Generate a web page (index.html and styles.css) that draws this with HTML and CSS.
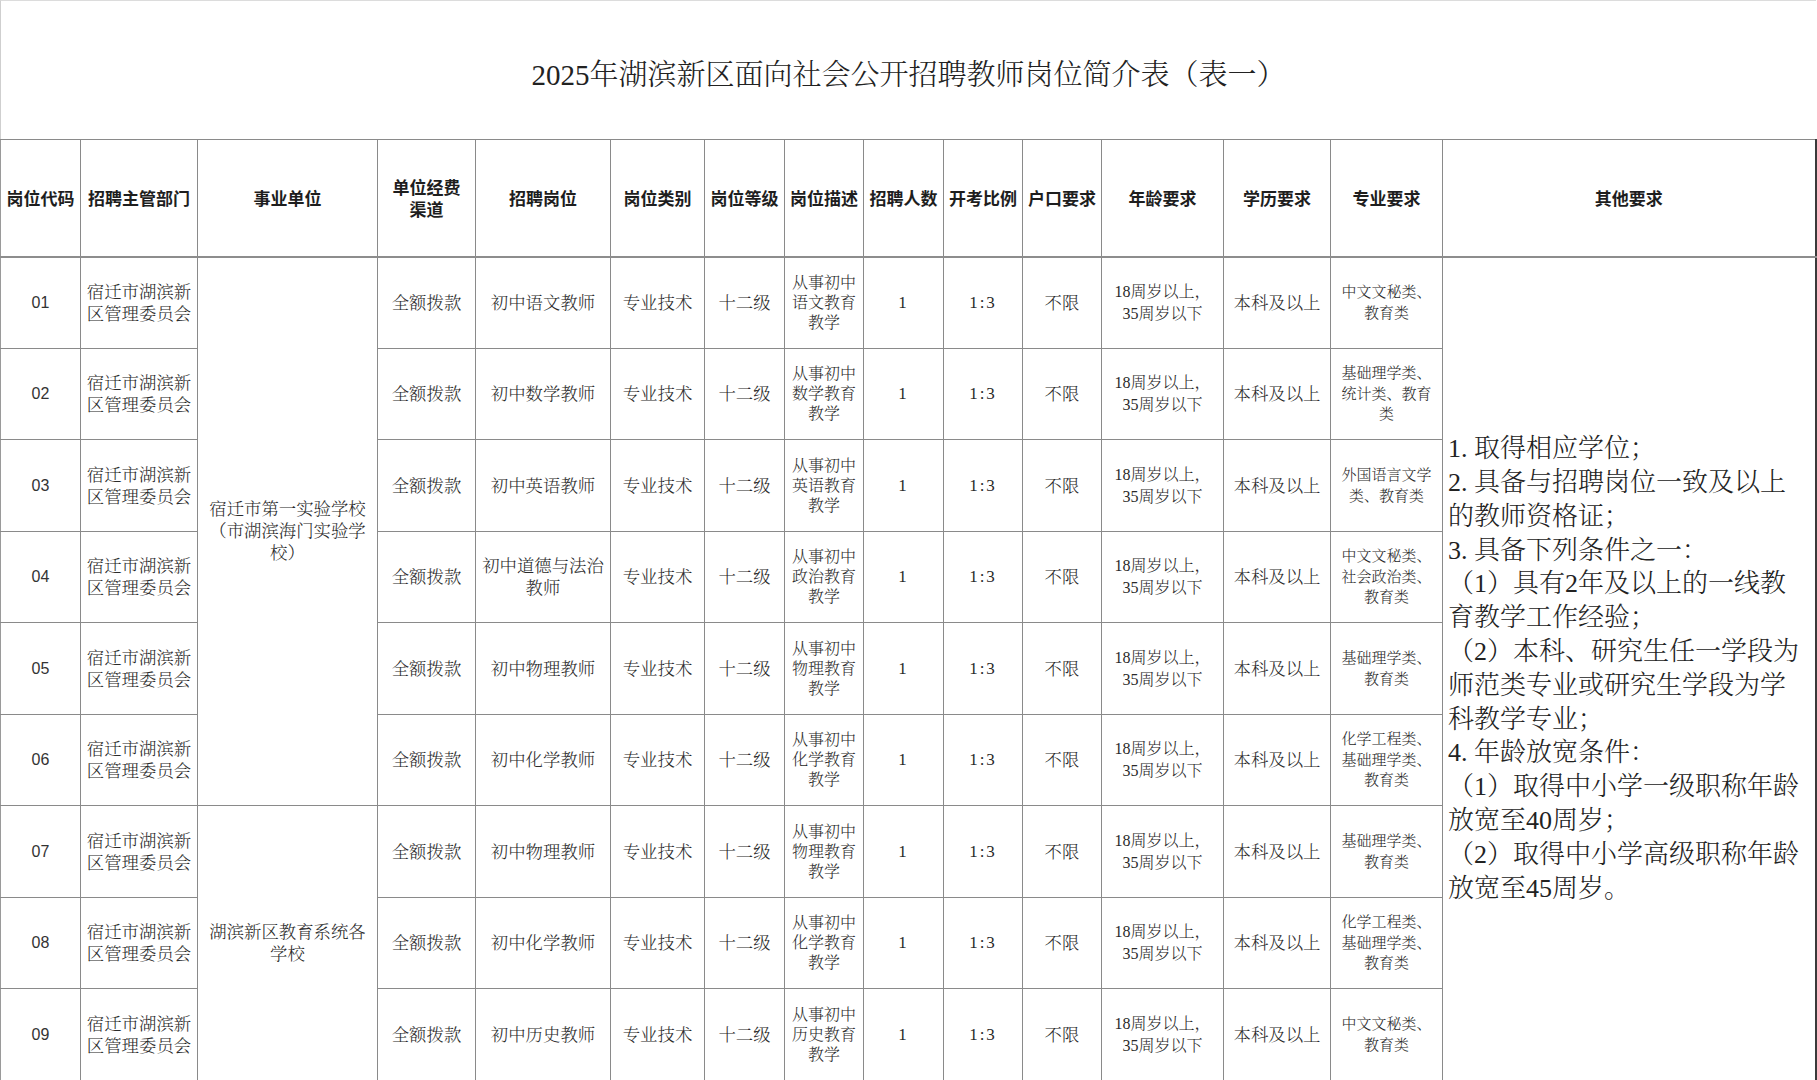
FILE: index.html
```html
<!DOCTYPE html>
<html lang="zh-CN">
<head>
<meta charset="utf-8">
<title>2025年湖滨新区面向社会公开招聘教师岗位简介表（表一）</title>
<link rel="stylesheet" href="styles.css">
</head>
<body>
<div class="sheet">
  <div class="title-area">
    <h1 class="title">2025年湖滨新区面向社会公开招聘教师岗位简介表（表一）</h1>
  </div>
  <table class="grid">
    <colgroup>
      <col class="w80"><col class="w117"><col class="w180"><col class="w98"><col class="w135">
      <col class="w94"><col class="w80"><col class="w79"><col class="w80"><col class="w79">
      <col class="w79"><col class="w122"><col class="w107"><col class="w112"><col class="w373">
    </colgroup>
    <thead>
      <tr class="head">
        <th>岗位代码</th><th>招聘主管部门</th><th>事业单位</th><th>单位经费<br>渠道</th><th>招聘岗位</th>
        <th>岗位类别</th><th>岗位等级</th><th>岗位描述</th><th>招聘人数</th><th>开考比例</th>
        <th>户口要求</th><th>年龄要求</th><th>学历要求</th><th>专业要求</th><th>其他要求</th>
      </tr>
    </thead>
    <tbody>
      <tr class="r92">
        <td class="code">01</td><td>宿迁市湖滨新<br>区管理委员会</td>
        <td rowspan="6">宿迁市第一实验学校<br>（市湖滨海门实验学<br>校）</td>
        <td>全额拨款</td><td>初中语文教师</td><td>专业技术</td><td>十二级</td>
        <td class="desc">从事初中<br>语文教育<br>教学</td><td class="num">1</td><td class="num">1:3</td><td>不限</td>
        <td class="age">18周岁以上，<br>35周岁以下</td><td>本科及以上</td><td class="major">中文文秘类、<br>教育类</td>
        <td rowspan="9" class="other">1. 取得相应学位；<br>2. 具备与招聘岗位一致及以上<br>的教师资格证；<br>3. 具备下列条件之一：<br>（1）具有2年及以上的一线教<br>育教学工作经验；<br>（2）本科、研究生任一学段为<br>师范类专业或研究生学段为学<br>科教学专业；<br>4. 年龄放宽条件：<br>（1）取得中小学一级职称年龄<br>放宽至40周岁；<br>（2）取得中小学高级职称年龄<br>放宽至45周岁。</td>
      </tr>
      <tr class="r91">
        <td class="code">02</td><td>宿迁市湖滨新<br>区管理委员会</td>
        <td>全额拨款</td><td>初中数学教师</td><td>专业技术</td><td>十二级</td>
        <td class="desc">从事初中<br>数学教育<br>教学</td><td class="num">1</td><td class="num">1:3</td><td>不限</td>
        <td class="age">18周岁以上，<br>35周岁以下</td><td>本科及以上</td><td class="major">基础理学类、<br>统计类、教育<br>类</td>
      </tr>
      <tr class="r92">
        <td class="code">03</td><td>宿迁市湖滨新<br>区管理委员会</td>
        <td>全额拨款</td><td>初中英语教师</td><td>专业技术</td><td>十二级</td>
        <td class="desc">从事初中<br>英语教育<br>教学</td><td class="num">1</td><td class="num">1:3</td><td>不限</td>
        <td class="age">18周岁以上，<br>35周岁以下</td><td>本科及以上</td><td class="major">外国语言文学<br>类、教育类</td>
      </tr>
      <tr class="r91">
        <td class="code">04</td><td>宿迁市湖滨新<br>区管理委员会</td>
        <td>全额拨款</td><td>初中道德与法治<br>教师</td><td>专业技术</td><td>十二级</td>
        <td class="desc">从事初中<br>政治教育<br>教学</td><td class="num">1</td><td class="num">1:3</td><td>不限</td>
        <td class="age">18周岁以上，<br>35周岁以下</td><td>本科及以上</td><td class="major">中文文秘类、<br>社会政治类、<br>教育类</td>
      </tr>
      <tr class="r92">
        <td class="code">05</td><td>宿迁市湖滨新<br>区管理委员会</td>
        <td>全额拨款</td><td>初中物理教师</td><td>专业技术</td><td>十二级</td>
        <td class="desc">从事初中<br>物理教育<br>教学</td><td class="num">1</td><td class="num">1:3</td><td>不限</td>
        <td class="age">18周岁以上，<br>35周岁以下</td><td>本科及以上</td><td class="major">基础理学类、<br>教育类</td>
      </tr>
      <tr class="r91">
        <td class="code">06</td><td>宿迁市湖滨新<br>区管理委员会</td>
        <td>全额拨款</td><td>初中化学教师</td><td>专业技术</td><td>十二级</td>
        <td class="desc">从事初中<br>化学教育<br>教学</td><td class="num">1</td><td class="num">1:3</td><td>不限</td>
        <td class="age">18周岁以上，<br>35周岁以下</td><td>本科及以上</td><td class="major">化学工程类、<br>基础理学类、<br>教育类</td>
      </tr>
      <tr class="r92">
        <td class="code">07</td><td>宿迁市湖滨新<br>区管理委员会</td>
        <td rowspan="3">湖滨新区教育系统各<br>学校</td>
        <td>全额拨款</td><td>初中物理教师</td><td>专业技术</td><td>十二级</td>
        <td class="desc">从事初中<br>物理教育<br>教学</td><td class="num">1</td><td class="num">1:3</td><td>不限</td>
        <td class="age">18周岁以上，<br>35周岁以下</td><td>本科及以上</td><td class="major">基础理学类、<br>教育类</td>
      </tr>
      <tr class="r91">
        <td class="code">08</td><td>宿迁市湖滨新<br>区管理委员会</td>
        <td>全额拨款</td><td>初中化学教师</td><td>专业技术</td><td>十二级</td>
        <td class="desc">从事初中<br>化学教育<br>教学</td><td class="num">1</td><td class="num">1:3</td><td>不限</td>
        <td class="age">18周岁以上，<br>35周岁以下</td><td>本科及以上</td><td class="major">化学工程类、<br>基础理学类、<br>教育类</td>
      </tr>
      <tr class="r92 last">
        <td class="code">09</td><td>宿迁市湖滨新<br>区管理委员会</td>
        <td>全额拨款</td><td>初中历史教师</td><td>专业技术</td><td>十二级</td>
        <td class="desc">从事初中<br>历史教育<br>教学</td><td class="num">1</td><td class="num">1:3</td><td>不限</td>
        <td class="age">18周岁以上，<br>35周岁以下</td><td>本科及以上</td><td class="major">中文文秘类、<br>教育类</td>
      </tr>
    </tbody>
  </table>
</div>
</body>
</html>
```
FILE: styles.css
```css
html, body {
  margin: 0;
  padding: 0;
  background: #ffffff;
}

body {
  font-family: "Liberation Serif", "Noto Serif CJK SC", "Noto Sans CJK SC", serif;
  color: #2a2a2a;
  overflow: hidden;
}

.sheet {
  width: 1817px;
  height: 1080px;
  overflow: hidden;
}

.title-area {
  width: 1815px;
  height: 138px;
  border-top: 1px solid #dcdcdc;
  border-left: 1px solid #cfcfcf;
  display: flex;
  align-items: center;
  justify-content: center;
}

.title {
  margin: 0;
  padding-top: 4px;
  font-size: 29px;
  font-weight: 300;
  letter-spacing: 0;
  color: #222;
  white-space: nowrap;
}

.grid {
  width: 1815px;
  table-layout: fixed;
  border-collapse: collapse;
  border-top: 1px solid #555;
}

.w80 { width: 80px; }
.w117 { width: 117px; }
.w180 { width: 180px; }
.w98 { width: 98px; }
.w135 { width: 135px; }
.w94 { width: 94px; }
.w79 { width: 79px; }
.w122 { width: 122px; }
.w107 { width: 107px; }
.w112 { width: 112px; }
.w373 { width: 373px; }

.grid th,
.grid td {
  border: 1px solid #8a8a8a;
  padding: 0 2px;
  text-align: center;
  vertical-align: middle;
  overflow: hidden;
}

.grid th:first-child,
.grid td:first-child {
  border-left-color: #9a9a9a;
}

.grid th:last-child,
.grid td.other {
  border-right: 2px solid #3a3a3a;
}

.head {
  height: 117px;
}

.grid th {
  font-family: "Noto Sans CJK SC", "Liberation Sans", sans-serif;
  font-weight: 700;
  font-size: 17px;
  line-height: 22px;
  color: #1e1e1e;
  border-bottom: 2px solid #8d8d8d;
  white-space: nowrap;
}

.grid td {
  font-size: 17.4px;
  line-height: 22px;
  font-weight: 300;
  white-space: nowrap;
}

.r92 { height: 92px; }
.r91 { height: 91px; }

.last td {
  border-bottom: 1px solid #333;
}

.grid td.other {
  border-bottom: 1px solid #333;
}

.grid td.code {
  font-family: "Liberation Sans", "Noto Sans CJK SC", sans-serif;
  font-size: 16px;
  color: #333;
}

.grid td.num {
  font-size: 17px;
  letter-spacing: 2px;
}

.grid td.desc {
  font-size: 16px;
  line-height: 20px;
}

.grid td.age {
  font-size: 16px;
  line-height: 22px;
}

.grid td.major {
  font-size: 15px;
  line-height: 20.5px;
}

.grid td.other {
  text-align: left;
  padding: 0 4px 0 5px;
  font-size: 26px;
  line-height: 33.8px;
  color: #222;
}
```
